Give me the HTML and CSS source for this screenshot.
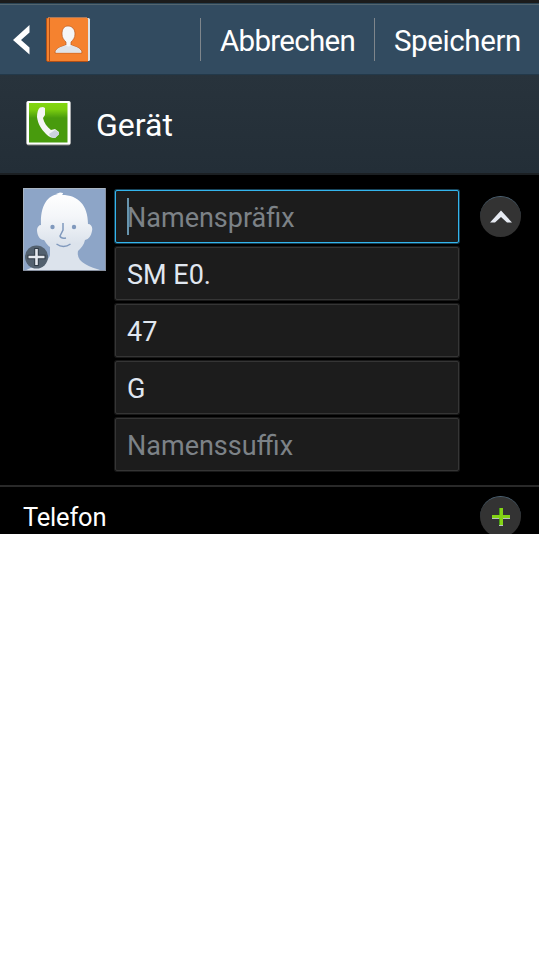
FILE: index.html
```
<!DOCTYPE html>
<html lang="de">

<head>
    <meta charset="UTF-8">
    <meta name="viewport" content="width=device-width, initial-scale=1.0">
    <title>Kontakt</title>
    <link rel="stylesheet" href="styles.css">
</head>

<body>
    <div class="screen">
        <header class="topbar">
            <svg class="back" width="18" height="30" viewBox="0 0 18 30">
                <path d="M16.500 0v7.500L8 15l8.500 7.500v7L0 15z" fill="#fff" />
            </svg>
            <svg class="book" width="46" height="46" viewBox="0 0 46 46">
                <rect x="5" y="1" width="39" height="43" rx="1.500" fill="#dce3e8" />
                <path d="M2 1h39q1 0 1 1v43H3q-2 0-2-2V2q0-1 1-1z" fill="#f5822f" />
                <path d="M.5 1v43M3.500 1v44M1 44.500h41" fill="none" stroke="#b04f16" />
                <path d="M2 .5h39" stroke="#a8795d" />
                <path d="M16 17c0-5 2-8 6-8s7 3 7 8c0 4-2 6-4 8v3c5 2 11 3 11 8H9c0-5 6-6 11-8v-3c-2-2-4-4-4-8z" fill="#f5f6f7" stroke="#b85b22" stroke-width=".7" />
                <path d="M20 28c2 2 3 2 5 0 5 2 10 3 10 7.500H10C10 31 15 30 20 28z" fill="#dfe4e9" />
            </svg>
            <div class="actions">
                <div class="action cancel">Abbrechen</div>
                <div class="action save">Speichern</div>
            </div>
        </header>

        <div class="account">
            <svg class="phone" width="46" height="46" viewBox="0 0 46 46">
                <defs>
                    <linearGradient id="green" x2="0" y2="1">
                        <stop offset="0" stop-color="#82d60f" />
                        <stop offset=".16" stop-color="#7dcf10" />
                        <stop offset=".38" stop-color="#489b0d" />
                    </linearGradient>
                </defs>
                <rect x="1.500" y="1.500" width="44" height="44" rx="2" fill="#7d7f7b" />
                <rect x="1.500" y="1" width="44" height="43.500" rx="1.500" fill="#fff" />
                <rect x="4" y="3" width="38.500" height="39.500" fill="url(#green)" />
                <path d="M15 7.500l3-.5 2 1v7l-2 3c1 5 4 9 8 12l4-1 4 3v2l-4 4c-3 0-6-1-9-4-5-5-8-10-9-17 0-4 1-8 3-9.500z" fill="#f4f5f6" />
                <path d="M24 34l6-4 4 2.500v2L30 38c-2 0-5-1-6-4z" fill="#ccd2de" />
            </svg>
            <span class="account-name">Gerät</span>
        </div>

        <div class="names">
            <div class="avatar">
                <svg width="83" height="83" viewBox="0 0 83 83">
                    <defs>
                        <linearGradient id="skin" x2="0" y2="1">
                            <stop offset="0" stop-color="#fff" />
                            <stop offset=".3" stop-color="#f4f6f9" />
                            <stop offset=".65" stop-color="#dce3ec" />
                        </linearGradient>
                    </defs>
                    <rect width="83" height="83" fill="#8da5c7" />
                    <path d="M1 83l11-5c8-2 14-6 15-11v-8c-4-3-5-6-6-7-5 0-7-6-7-10 0-3 2-5 4-5C17 16 26 6 37 6l3-1-1 2c16 0 26 10 26 29 3 0 5 3 4 7-1 5-3 8-7 9-1 5-4 8-7 11-2 11 9 15 25 20z" fill="url(#skin)" />
                    <path d="M33 6l4-1.500 3 .5-1 2" fill="#fff" />
                    <circle cx="29.500" cy="39" r="2.200" fill="#8099bd" />
                    <circle cx="51" cy="39" r="2.200" fill="#8099bd" />
                    <path d="M40 35v7l-3 6q1 3 6 2M33.500 56q7 5 14 0" fill="none" stroke="#8099bd" stroke-width="1.500" />
                    <path d="M.5 83V.5H82" fill="none" stroke="#a9b5c2" />
                    <path d="M82.500 0v82.500H0" fill="none" stroke="#8790a0" />
                    <circle cx="13.500" cy="69" r="11.500" fill="#53616f" />
                    <path d="M13.500 60v18M4.500 69h18" stroke="#303b46" stroke-width="4.500" />
                    <path d="M13.500 61v16M5.500 69h16" stroke="#e6eaf0" stroke-width="2.600" />
                </svg>
            </div>
            <div class="fields">
                <div class="field focus"><span class="hint">Namenspräfix</span><i class="caret"></i></div>
                <div class="field">SM E0.</div>
                <div class="field">47</div>
                <div class="field">G</div>
                <div class="field"><span class="hint">Namenssuffix</span></div>
            </div>
            <div class="round collapse">
                <svg width="24" height="14" viewBox="0 0 24 14">
                    <path d="M1 12.500L12 .5l11 12h-5l-6-5.500-6 5.500z" fill="#e6eaf2" />
                </svg>
            </div>
        </div>

        <div class="section">
            <span class="section-title">Telefon</span>
            <div class="round add">
                <svg width="20" height="20" viewBox="0 0 20 20">
                    <path d="M8 1h4v7h7v4h-7v7H8v-7H1V8h7z" fill="#83d414" />
                    <path d="M1 11.500h7M12 11.500h7M8 18.500h4" stroke="#b5c3bc" />
                    <path d="M8.500 1v7M8.500 12v6" stroke="#4ca014" />
                </svg>
            </div>
        </div>
    </div>
</body>

</html>
```
FILE: styles.css
```
* {
    box-sizing: border-box;
}

body {
    margin: 0;
    background-color: #ffffff;
    font-family: Roboto, sans-serif;
    color: #ffffff;
}

.screen {
    width: 539px;
    height: 534px;
    overflow: hidden;
    background-color: #000000;
}

.topbar {
    height: 75px;
    display: flex;
    align-items: flex-start;
    background: linear-gradient(#1b1b1b 3px, #2a4252 3px, #2a4252 4px, #53656f 4px, #53656f 5px, #324b60 5px, #324b60 74px, #23394a 74px);
}

.back {
    margin: 25px 0 0 13px;
}

.book {
    margin: 17px 0 0 15px;
}

.actions {
    display: flex;
    margin: 18px 0 0 auto;
}

.action {
    height: 43px;
    padding-left: 19px;
    border-left: 1px solid #7f868c;
    font-size: 29.5px;
    line-height: 47px;
    letter-spacing: -0.4px;
    white-space: nowrap;
}

.cancel {
    width: 174px;
    letter-spacing: -0.7px;
}

.save {
    width: 165px;
}

.account {
    height: 100px;
    display: flex;
    align-items: center;
    padding-left: 25px;
    background: linear-gradient(#28333c, #232e37 98px, #1b1f22 98px);
}

.phone {
    margin-top: -4px;
}

.account-name {
    margin-left: 25px;
    font-size: 32px;
}

.names {
    height: 310px;
    display: flex;
    align-items: flex-start;
    padding: 13px 0 0 23px;
}

.avatar {
    height: 83px;
}

.fields {
    width: 344px;
    margin: 2px 0 0 9px;
    display: grid;
    gap: 4px;
}

.field {
    height: 53px;
    padding: 2px 0 0 11px;
    display: flex;
    align-items: center;
    border: 1px solid #353535;
    border-radius: 2px;
    box-shadow: 0 0 0 1px #181818;
    background-color: #1c1c1c;
    color: #e0e7f0;
    font-size: 27px;
}

.field.focus {
    position: relative;
    border-color: #33b5ed;
    box-shadow: 0 0 0 1px #17445a;
}

.hint {
    color: #7c8287;
}

.caret {
    position: absolute;
    left: 11px;
    top: 7px;
    width: 2px;
    height: 37px;
    background-color: #6794ad;
}

.round {
    width: 41px;
    height: 41px;
    display: grid;
    place-content: center;
    border-radius: 50%;
    border-top: 1px solid #4b6172;
    background-color: #333333;
}

.collapse {
    margin: 8px 0 0 21px;
}

.section {
    height: 60px;
    display: flex;
    justify-content: space-between;
    align-items: flex-start;
    padding: 9px 18px 0 23px;
    border-top: 2px solid #292929;
}

.section-title {
    font-size: 25.5px;
    line-height: 43px;
    letter-spacing: -0.2px;
}
```
